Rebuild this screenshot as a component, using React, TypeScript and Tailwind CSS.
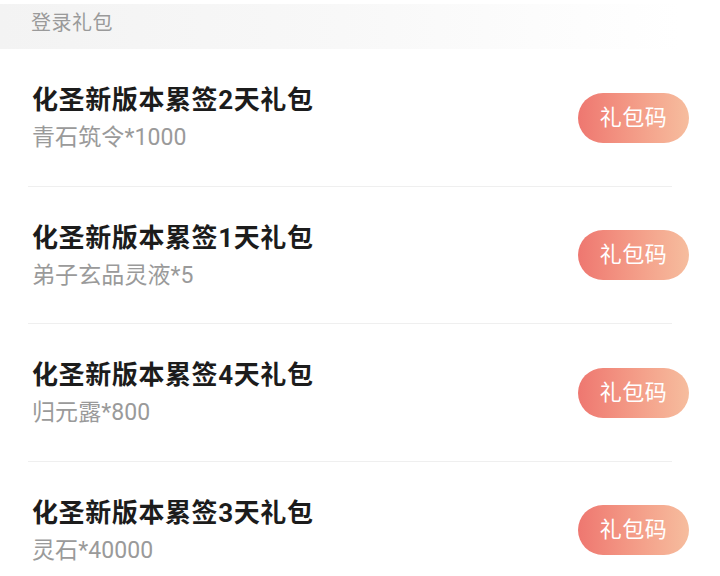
import React from "react";

const items = [
  { title: "化圣新版本累签2天礼包", sub: "青石筑令*1000" },
  { title: "化圣新版本累签1天礼包", sub: "弟子玄品灵液*5" },
  { title: "化圣新版本累签4天礼包", sub: "归元露*800" },
  { title: "化圣新版本累签3天礼包", sub: "灵石*40000" },
];

export default function App() {
  return (
    <div
      className="w-[720px] h-[576px] overflow-hidden bg-white"
      style={{ fontFamily: 'Roboto, "Noto Sans CJK SC", "Noto Sans", sans-serif' }}
    >
      <div className="mt-[4px] h-[45px] w-[680px] bg-gradient-to-r from-[#f3f3f3] via-[#f8f8f8] to-white pl-[31px] pt-[7px]">
        <span className="text-[20px] leading-[24px] tracking-[0.5px] text-[#9a9a9a]">登录礼包</span>
      </div>
      <div className="pl-[28px]">
        {items.map((it, i) => (
          <div
            key={i}
            className="w-[644px] h-[137.5px] flex items-center border-b border-[#efefef]"
          >
            <div className="flex flex-col pl-[4px] pt-[2px] flex-1">
              <div className="text-[26px] leading-[34px] font-bold tracking-[0.6px] text-[#1c1c1c]">{it.title}</div>
              <div className="mt-[6px] text-[23px] leading-[30px] tracking-[0.1px] text-[#9a9a9a]">{it.sub}</div>
            </div>
            <button className="w-[111px] h-[50px] shrink-0 -mr-[17px] mt-[1px] rounded-full bg-gradient-to-r from-[#ee7770] to-[#f6bd9e] text-white text-[22px] leading-none tracking-[0.5px] flex items-center justify-center">
              礼包码
            </button>
          </div>
        ))}
      </div>
    </div>
  );
}
